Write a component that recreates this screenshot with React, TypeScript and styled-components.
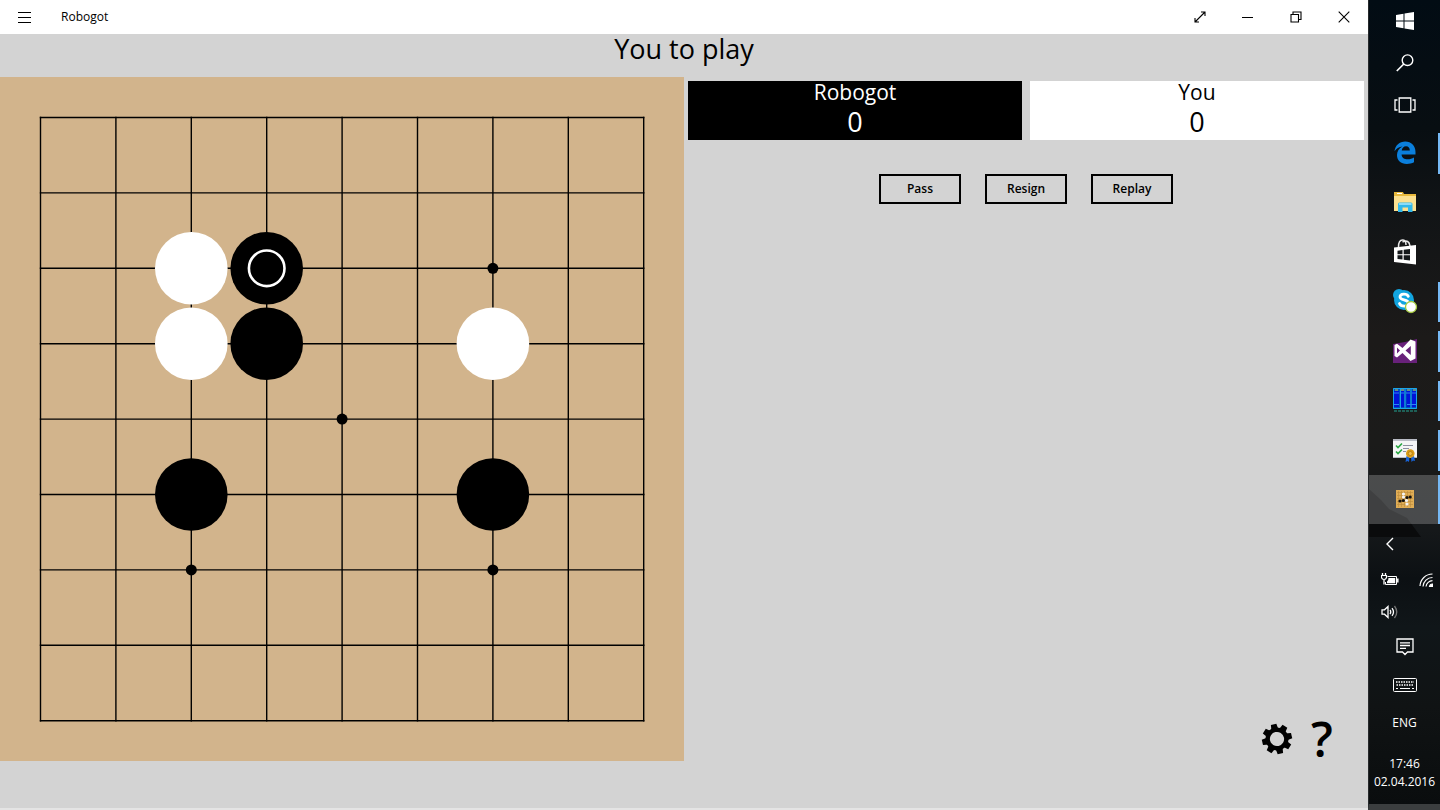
import React from "react";
import styled, { createGlobalStyle } from "styled-components";

const GlobalStyle = createGlobalStyle`
  *, *::before, *::after { box-sizing: border-box; }
  body {
    margin: 0;
    background: #d3d3d3;
    color: #000;
    font-family: "Open Sans", "Noto Sans", sans-serif;
  }
  button { font-family: inherit; color: inherit; cursor: pointer; }
  svg { display: block; }
`;

const Desktop = styled.div`
  display: flex;
  min-height: 100vh;
`;

const AppWindow = styled.div`
  flex: 1;
  min-width: 0;
  display: flex;
  flex-direction: column;
  background: #d3d3d3;
  border-bottom: 2px solid #e4e4e4;
`;

const TitleBar = styled.header`
  display: flex;
  align-items: center;
  height: 34px;
  background: #fff;
`;

const TitleButton = styled.button`
  display: grid;
  place-items: center;
  width: 48px;
  height: 34px;
  padding: 0;
  border: 0;
  background: transparent;
`;

const AppName = styled.span`
  flex: 1;
  padding-left: 13px;
  font-size: 12px;
  line-height: 16px;
`;

const Status = styled.h1`
  margin: 0;
  padding-bottom: 13px;
  font-size: 27px;
  line-height: 30px;
  font-weight: 400;
  text-align: center;
`;

const Game = styled.main`
  display: grid;
  grid-template-columns: 1fr 1fr;
`;

const Board = styled.svg`
  width: 100%;
  aspect-ratio: 1;
  background: #d2b48c;
`;

const Panel = styled.section`
  display: flex;
  flex-direction: column;
`;

const Scores = styled.div`
  display: grid;
  grid-template-columns: 1fr 1fr;
  gap: 8px;
  padding: 4px;
`;

const ScoreCard = styled.div<{ $dark?: boolean }>`
  height: 59px;
  text-align: center;
  background: ${(p) => (p.$dark ? "#000" : "#fff")};
  color: ${(p) => (p.$dark ? "#fff" : "#000")};
`;

const PlayerName = styled.div`
  font-size: 21px;
  line-height: 23px;
`;

const Points = styled.div`
  font-size: 27px;
  line-height: 36px;
`;

const Actions = styled.div`
  display: flex;
  justify-content: center;
  gap: 24px;
  padding-top: 30px;
`;

const ActionButton = styled.button`
  width: 82px;
  height: 30px;
  padding: 0;
  border: 2px solid #000;
  background: transparent;
  font-size: 12px;
  line-height: 16px;
  font-weight: 600;
`;

const Tools = styled.div`
  display: flex;
  justify-content: flex-end;
  gap: 5px;
  margin-top: auto;
  padding: 0 26px 2px;
`;

const ToolButton = styled.button`
  display: grid;
  place-items: center;
  width: 40px;
  height: 40px;
  padding: 0;
  border: 0;
  background: transparent;
  font-size: 48px;
  line-height: 40px;
  font-weight: 600;
`;

const Taskbar = styled.aside`
  position: relative;
  display: flex;
  flex-direction: column;
  width: 72px;
  flex: none;
  color: #fff;
  background: linear-gradient(#020c14 0, #080e12 16%, #111416 26%, #1c1a19 42%, #1b1b1a 55%, #15181a 66%, #0c1013 72%, #101619 78%, #101314 88%, #0a0d0e 100%);
  border-left: 1px solid #26292b;
  border-bottom: 6px solid #3b3e3f;
`;

const Scenery = styled.svg`
  position: absolute;
  left: 0;
  top: 475px;
`;

const TaskItem = styled.button<{ $running?: boolean; $active?: boolean }>`
  position: relative;
  display: grid;
  place-items: center;
  width: 100%;
  min-height: 42px;
  padding: 0;
  border: 0;
  background: ${(p) => (p.$active ? "rgba(255,255,255,0.22)" : "transparent")};
  &::after {
    content: "";
    display: ${(p) => (p.$running ? "block" : "none")};
    position: absolute;
    right: 0;
    top: ${(p) => (p.$active ? "0" : "5px")};
    bottom: ${(p) => (p.$active ? "0" : "4px")};
    width: 2px;
    background: #76b9f5;
  }
`;

const Pinned = styled.nav`
  display: grid;
  grid-template-rows: repeat(8, 1fr);
  height: 396px;
  margin-top: 2px;
`;

const Tray = styled.div`
  position: relative;
  display: grid;
  grid-template-columns: 42px 29px;
  grid-template-rows: 40px 31px 33px;
`;

const TrayButton = styled.button`
  display: grid;
  place-items: center;
  padding: 0;
  border: 0;
  background: transparent;
`;

const TrayRow = styled.button`
  display: grid;
  place-items: center;
  height: 38px;
  padding: 0;
  border: 0;
  background: transparent;
  font-size: 12px;
  line-height: 18px;
`;

const Clock = styled.time`
  padding-top: 13px;
  font-size: 12px;
  line-height: 18px;
  text-align: center;
  white-space: nowrap;
`;

const STEP = 75.4;
const ORIGIN = 40.5;
const at = (n: number) => ORIGIN + STEP * n;

const stars = [[6, 2], [4, 4], [2, 6], [6, 6]];
const stones = [
  { x: 2, y: 2, color: "#fff" },
  { x: 3, y: 2, color: "#000", last: true },
  { x: 2, y: 3, color: "#fff" },
  { x: 3, y: 3, color: "#000" },
  { x: 6, y: 3, color: "#fff" },
  { x: 2, y: 5, color: "#000" },
  { x: 6, y: 5, color: "#000" },
];

function GoBoard() {
  return (
    <Board viewBox="0 0 684 684" role="img" aria-label="Go board">
      <g stroke="#000" strokeWidth="1.4" strokeLinecap="square">
        {Array.from({ length: 9 }, (_, i) => (
          <React.Fragment key={i}>
            <line x1={at(0)} x2={at(8)} y1={at(i)} y2={at(i)} />
            <line y1={at(0)} y2={at(8)} x1={at(i)} x2={at(i)} />
          </React.Fragment>
        ))}
      </g>
      {stars.map(([x, y]) => (
        <circle key={`${x}-${y}`} cx={at(x)} cy={at(y)} r="5.5" />
      ))}
      {stones.map((s) => (
        <g key={`${s.x}-${s.y}`}>
          <circle cx={at(s.x)} cy={at(s.y)} r="36.3" fill={s.color} />
          {s.last && (
            <circle cx={at(s.x)} cy={at(s.y)} r="17.8" fill="none" stroke="#fff" strokeWidth="2.6" />
          )}
        </g>
      ))}
    </Board>
  );
}

const Gear = () => (
  <svg width="32" height="32" viewBox="-16 -16 32 32">
    <g transform="rotate(-13)">
      {Array.from({ length: 8 }, (_, i) => (
        <path key={i} d="M-3.6 -9 L-2.8 -15 H2.8 L3.6 -9Z" transform={`rotate(${i * 45})`} />
      ))}
      <circle r="9.3" fill="none" stroke="#000" strokeWidth="4.4" />
    </g>
  </svg>
);

const Start = () => (
  <svg width="18" height="18" viewBox="0 0 18 18" fill="#fff">
    <path d="M0 3 7.5 1.8V8.5H0zM8.5 1.6 18 0V8.5H8.5zM0 9.5H7.5V16.2L0 15zM8.5 9.5H18V18L8.5 16.4z" />
  </svg>
);

const Search = () => (
  <svg width="18" height="18" viewBox="0 0 18 18" fill="none" stroke="#fff" strokeWidth="1.4">
    <circle cx="11.5" cy="6.2" r="5.3" />
    <path d="M7.8 10 .8 17" strokeWidth="1.7" />
  </svg>
);

const TaskView = () => (
  <svg width="22" height="16" viewBox="0 0 22 16" fill="none" stroke="#fff" strokeWidth="1.3">
    <path d="M5.2 1H16.8V15H5.2zM3.5 3H1V13H3.5M18.5 3H21V13H18.5" />
  </svg>
);

const Edge = () => (
  <svg width="22" height="23" viewBox="0 0 22 23">
    <path
      fill="#0b7fdc"
      d="M.5 10.2C1.2 4.2 5.5.4 11.2.4c6.200 0 10.300 4.200 10.300 10.600v2.400H7.600c.2 3.300 2.800 4.900 6.100 4.900 2.300 0 4.500-.6 6.300-1.800v4.800c-2 1.100-4.600 1.600-7.200 1.600C6.700 22.900 3 19.500 3 14.100c0-3.700 2-6.900 5.500-8.600C5 5.700 2.200 7.600.5 10.200zM7.700 9.500h8.100c0-2.600-1.300-4.200-3.800-4.200-2.300 0-3.900 1.600-4.300 4.200z"
    />
  </svg>
);

const Explorer = () => (
  <svg width="24" height="20" viewBox="0 0 24 20">
    <path fill="#e8b93c" d="M1 0H10L11 2H23V19H1z" />
    <path fill="#fbe08f" d="M1 4H23V19H1z" />
    <path fill="#fff" d="M4 1H9V2H4z" />
    <path fill="#31b8ea" d="M5 20V12Q5 10.500 6.500 10.500H18Q19.500 10.500 19.500 12V20H15V15.500H9.500V20z" />
    <path fill="#8adcf7" d="M6 11H18.500V13H6z" />
  </svg>
);

const Store = () => (
  <svg width="24" height="26" viewBox="0 0 24 26">
    <path d="M5.500 8C5.500 3 7 1 9.500 1S13 3 13 6M9.500 3Q16 0 17 7" fill="none" stroke="#e8e8e8" strokeWidth="1.500" />
    <path fill="#fff" d="M1 8.500 23 6V25.500L1 23z" />
    <path fill="#15191b" d="M4.500 11.700 9.500 11V15.200H4.500zM10.700 10.800 17 10V15.200H10.700zM4.500 16.300H9.500V20.600L4.500 20zM10.700 16.300H17V21.600L10.700 20.800z" />
  </svg>
);

const Skype = () => (
  <svg width="26" height="26" viewBox="0 0 26 26">
    <circle cx="12" cy="12" r="10" fill="#12a5e0" />
    <circle cx="7" cy="7" r="6" fill="#12a5e0" />
    <circle cx="17" cy="17" r="6" fill="#12a5e0" />
    <path
      d="M16.300 8.300C15 5.500 8 5.300 8 9c0 3.800 8.500 2 8.500 6.200 0 4-7.700 3.800-9 .3"
      fill="none"
      stroke="#fff"
      strokeWidth="2.800"
      strokeLinecap="round"
    />
    <circle cx="19" cy="19" r="5.500" fill="#fff" stroke="#a3c93a" strokeWidth="1.300" />
  </svg>
);

const VisualStudio = () => (
  <svg width="24" height="26" viewBox="0 0 24 26">
    <path fill="#68217a" d="M0 6 12 4 24 1V25H0z" />
    <path
      fill="#fff"
      fillRule="evenodd"
      d="M17.500 1.500 22.500 3.500V20.500L17.500 23 9.500 15 4 19.500 1.500 18V7L4 5.800 9.500 10zM17.800 8 12.500 12.500 17.800 17zM4 9.500V15.500L7 12.500z"
    />
  </svg>
);

const Shelves = () => (
  <svg width="26" height="26" viewBox="0 0 26 26">
    <path fill="#05b" d="M1 1H25V22H1z" />
    <path fill="#0013d8" d="M2 4H7V20H2zM8.500 4H12V20H8.500zM14.500 4H18V20H14.500zM20 4H24V20H20z" />
    <path d="M1.500 1.500H24.500V21.500H1.500zM8.500 2V21M13 2V21M19 2V21" fill="none" stroke="#19a5e8" strokeWidth="1" />
    <path d="M3 3H6M9 3H12M15 3H18M21 3H24" stroke="#c9c352" strokeWidth="1" />
    <path d="M2 6H7M9 6H12M14 6H18M20 6H24M2 17.500H7M15 17.500H24" stroke="#2b85f1" strokeWidth="1" />
    <path d="M2 24H25" stroke="#20776b" strokeWidth="1.500" strokeDasharray="3 1" />
  </svg>
);

const Certificate = () => (
  <svg width="24" height="24" viewBox="0 0 24 24">
    <path fill="#f4f4f6" d="M0 1H24V20H0z" />
    <path fill="#b9bcc5" d="M0 1H24V3H0zM0 19H24V20H0z" />
    <path d="m3 7.500 2 2 4-4M3 13.500l2 2 4-4" fill="none" stroke="#29a742" strokeWidth="1.600" />
    <path d="M10 7.500H20M10 10.500H16M10 13.500H13" stroke="#8b8ea0" />
    <path fill="#1763d8" d="m13.500 18 3 1-.5 5-1.500-1-2 1zM18 19l3-1 1 5-2-.5-1.500 1.500z" />
    <circle cx="17.300" cy="15.500" r="4.300" fill="#d99a16" />
    <circle cx="17.300" cy="15.500" r="2" fill="#efbd4c" stroke="#a9710b" strokeWidth=".7" />
  </svg>
);

const MiniBoard = () => (
  <svg width="18" height="18" viewBox="0 0 18 18">
    <path fill="#e0ad55" d="M0 0H18V18H0z" />
    <path
      d="M2.500 1V17M5.500 1V17M8.500 1V17M11.500 1V17M14.500 1V17M1 2.500H17M1 5.500H17M1 8.500H17M1 11.500H17M1 14.500H17"
      stroke="#b98a3c"
      strokeWidth=".6"
    />
    <g fill="#f4f4f4">
      <circle cx="7.500" cy="4" r="1.600" /><circle cx="7.500" cy="7" r="1.600" />
      <circle cx="10.500" cy="10.500" r="1.600" /><circle cx="11" cy="14" r="1.600" />
    </g>
    <g fill="#111">
      <circle cx="4" cy="11" r="1.600" /><circle cx="7.300" cy="10.500" r="1.600" />
      <circle cx="11" cy="7.500" r="1.600" /><circle cx="14.200" cy="7" r="1.600" />
    </g>
  </svg>
);

const Battery = () => (
  <svg width="18" height="14" viewBox="0 0 18 14" fill="none" stroke="#fff">
    <path d="M6.500 3.500H15.500V11.500H4.500V9" />
    <path d="M16.800 5.500V9.500" strokeWidth="1.500" />
    <path d="M7.500 5H14.200V10.200H6V8.500Q7.500 7.500 7.500 5z" fill="#fff" stroke="none" />
    <path d="M1.500 0V2.500M4.500 0V2.500M3 7V11.500" strokeWidth="1.300" />
    <path d="M0.500 2.500H5.500V4.500Q5 6.500 3 6.500T.5 4.500z" strokeWidth="1.200" />
  </svg>
);

const Wifi = () => (
  <svg width="14" height="14" viewBox="0 0 14 14" fill="none" stroke="#fff" strokeWidth="1.200">
    <path d="M1 13A12.500 12.500 0 0 1 13.500 1M4 13.500A9.500 9.500 0 0 1 13.500 4.500M7 13.500A6.500 6.500 0 0 1 13.500 7.700" />
    <path d="M10.500 13.500A3 3 0 0 1 13.500 11V13.500z" fill="#fff" />
  </svg>
);

const Volume = () => (
  <svg width="18" height="14" viewBox="0 0 18 14" fill="none" stroke="#fff" strokeWidth="1.300">
    <path d="M1 4.800H3.500L7 1.500V12.500L3.500 9.200H1zM9 5Q10.500 7 9 9M11 3.200Q14 7 11 10.800" />
    <path d="M13.500 1Q18 7 13.500 13" stroke="#777" />
  </svg>
);

const Notifications = () => (
  <svg width="18" height="18" viewBox="0 0 18 18" fill="none" stroke="#fff" strokeWidth="1.300">
    <path d="M1 1H17V14H11.500L9 16.500 6.500 14H1zM4 4.800H14M4 7.500H14M4 10.300H10" />
  </svg>
);

const Keyboard = () => (
  <svg width="24" height="14" viewBox="0 0 24 14" fill="none" stroke="#fff">
    <rect x=".5" y=".5" width="23" height="13" rx="1" />
    <path d="M3 4H21M3.500 7H21" strokeDasharray="1.500 1" strokeWidth="1.500" />
    <path d="M3 10.500H5M7 10.500H17M19 10.500H21" />
  </svg>
);

export default function App() {
  return (
    <>
      <GlobalStyle />
      <Desktop>
        <AppWindow>
          <TitleBar>
            <TitleButton aria-label="Menu">
              <svg width="14" height="11" viewBox="0 0 14 11" stroke="#000">
                <path d="M1 .5H14M1 5.500H14M1 10.500H14" />
              </svg>
            </TitleButton>
            <AppName>Robogot</AppName>
            <TitleButton aria-label="Full screen">
              <svg width="12" height="12" viewBox="0 0 12 12" fill="none" stroke="#000" strokeWidth="1.100">
                <path d="M1 11 11 1M7 1H11V5M1 7V11H5" />
              </svg>
            </TitleButton>
            <TitleButton aria-label="Minimize">
              <svg width="12" height="2" viewBox="0 0 12 2" stroke="#000">
                <path d="M0 1.500H11" />
              </svg>
            </TitleButton>
            <TitleButton aria-label="Restore">
              <svg width="12" height="12" viewBox="0 0 12 12" fill="none" stroke="#000" strokeWidth="1.100">
                <path d="M1 3.500H8.500V11H1zM3 3.500V1H11V8.500H8.500" />
              </svg>
            </TitleButton>
            <TitleButton aria-label="Close">
              <svg width="12" height="12" viewBox="0 0 12 12" stroke="#000" strokeWidth="1.100">
                <path d="M.7.700 11.300 11.300M11.300.7.700 11.300" />
              </svg>
            </TitleButton>
          </TitleBar>
          <Status>You to play</Status>
          <Game>
            <GoBoard />
            <Panel>
              <Scores>
                <ScoreCard $dark>
                  <PlayerName>Robogot</PlayerName>
                  <Points>0</Points>
                </ScoreCard>
                <ScoreCard>
                  <PlayerName>You</PlayerName>
                  <Points>0</Points>
                </ScoreCard>
              </Scores>
              <Actions>
                <ActionButton>Pass</ActionButton>
                <ActionButton>Resign</ActionButton>
                <ActionButton>Replay</ActionButton>
              </Actions>
              <Tools>
                <ToolButton aria-label="Settings"><Gear /></ToolButton>
                <ToolButton aria-label="Help">?</ToolButton>
              </Tools>
            </Panel>
          </Game>
        </AppWindow>

        <Taskbar>
          <Scenery width="70" height="70" viewBox="0 0 70 70">
            <path fill="#0a0b0c" d="M0 14 12 25 20 34 38 43 52 62H0z" />
          </Scenery>
          <TaskItem aria-label="Start"><Start /></TaskItem>
          <TaskItem aria-label="Search"><Search /></TaskItem>
          <TaskItem aria-label="Task view"><TaskView /></TaskItem>
          <Pinned>
            <TaskItem $running aria-label="Edge"><Edge /></TaskItem>
            <TaskItem aria-label="File Explorer"><Explorer /></TaskItem>
            <TaskItem aria-label="Store"><Store /></TaskItem>
            <TaskItem $running aria-label="Skype"><Skype /></TaskItem>
            <TaskItem $running aria-label="Visual Studio"><VisualStudio /></TaskItem>
            <TaskItem $running aria-label="File manager"><Shelves /></TaskItem>
            <TaskItem $running aria-label="Certification"><Certificate /></TaskItem>
            <TaskItem $running $active aria-label="Robogot"><MiniBoard /></TaskItem>
          </Pinned>
          <Tray>
            <TrayButton aria-label="Show hidden icons">
              <svg width="8" height="14" viewBox="0 0 8 14" fill="none" stroke="#fff" strokeWidth="1.400">
                <path d="M7 1 1 7 7 13" />
              </svg>
            </TrayButton>
            <span />
            <TrayButton aria-label="Battery"><Battery /></TrayButton>
            <TrayButton aria-label="Network"><Wifi /></TrayButton>
            <TrayButton aria-label="Volume"><Volume /></TrayButton>
          </Tray>
          <TrayRow aria-label="Notifications"><Notifications /></TrayRow>
          <TrayRow aria-label="Touch keyboard"><Keyboard /></TrayRow>
          <TrayRow>ENG</TrayRow>
          <Clock>
            17:46
            <br />
            02.04.2016
          </Clock>
        </Taskbar>
      </Desktop>
    </>
  );
}
